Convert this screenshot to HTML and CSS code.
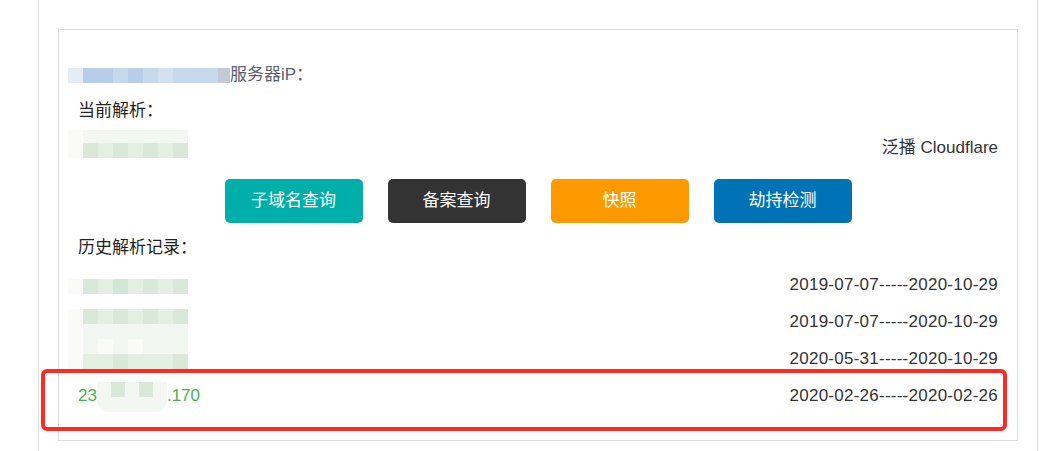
FILE: index.html
```html
<!DOCTYPE html>
<html lang="zh-CN">
<head>
<meta charset="utf-8">
<title>解析记录</title>
<link rel="stylesheet" href="styles.css">
</head>
<body>
<div class="frame">
  <div class="panel">
    <div class="row row-server">
      <span class="mosaic blue">
        <i class="b0"></i><i class="b2"></i><i class="b2"></i><i class="b1"></i><i class="b2"></i><i class="b1"></i><i class="b3"></i><i class="b1"></i><i class="b1"></i><i class="b1"></i><i class="b4"></i>
      </span>
      <span class="server-label">服务器iP：</span>
    </div>
    <div class="row label">当前解析：</div>
    <div class="row row-current">
      <span class="mosaic green two">
        <i class="m0"></i><i class="m1"></i><i class="m1"></i><i class="m1"></i><i class="m1"></i><i class="m1"></i><i class="m1"></i><i class="m1"></i>
        <i class="m0"></i><i class="m3"></i><i class="m2"></i><i class="m3"></i><i class="m2"></i><i class="m3"></i><i class="m2"></i><i class="m3"></i>
      </span>
      <span class="value">泛播 Cloudflare</span>
    </div>
    <div class="btns">
      <a class="btn teal">子域名查询</a>
      <a class="btn dark">备案查询</a>
      <a class="btn orange">快照</a>
      <a class="btn blue-btn">劫持检测</a>
    </div>
    <div class="row label history-label">历史解析记录：</div>
    <div class="history">
      <div class="hist-mosaic">
        <i class="m0"></i><i class="m3"></i><i class="m2"></i><i class="m4"></i><i class="m2"></i><i class="m3"></i><i class="m2"></i><i class="m3"></i>
        <i class="w"></i><i class="w"></i><i class="w"></i><i class="w"></i><i class="w"></i><i class="w"></i><i class="w"></i><i class="w"></i>
        <i class="m0"></i><i class="m3"></i><i class="m2"></i><i class="m3"></i><i class="m2"></i><i class="m3"></i><i class="m2"></i><i class="m3"></i>
        <i class="m0"></i><i class="m1"></i><i class="m1"></i><i class="m1"></i><i class="m1"></i><i class="m1"></i><i class="m1"></i><i class="m1"></i>
        <i class="m0"></i><i class="m1"></i><i class="m0"></i><i class="m1"></i><i class="m0"></i><i class="m1"></i><i class="m1"></i><i class="m1"></i>
        <i class="m0"></i><i class="m2"></i><i class="m2"></i><i class="m3"></i><i class="m2"></i><i class="m2"></i><i class="m2"></i><i class="m3"></i>
      </div>
      <div class="hist-row"><span class="ip"></span><span class="date">2019-07-07-----2020-10-29</span></div>
      <div class="hist-row"><span class="ip"></span><span class="date">2019-07-07-----2020-10-29</span></div>
      <div class="hist-row"><span class="ip"></span><span class="date">2020-05-31-----2020-10-29</span></div>
      <div class="hist-row marked">
        <span class="ip green-text">23<span class="mosaic ipblur"><i class="m1"></i><i class="m3"></i><i class="m1"></i><i class="m3"></i><i class="m1"></i><i class="m1"></i><i class="m1"></i><i class="m1"></i><i class="m1"></i><i class="m1"></i></span>.170</span>
        <span class="date">2020-02-26-----2020-02-26</span>
        <div class="highlight"></div>
      </div>
    </div>
  </div>
</div>
</body>
</html>
```

FILE: styles.css
```css
* { box-sizing: border-box; }
html, body { margin: 0; padding: 0; background: #fff; }
body {
  font-family: "Liberation Sans", "Noto Sans CJK SC", sans-serif;
  font-size: 17px;
  color: #333;
}
.frame {
  margin-left: 38px;
  width: 1000px;
  min-height: 451px;
  border-left: 1px solid #ddd;
  border-right: 1px solid #ddd;
  padding: 29px 19px 0 19px;
}
.panel {
  width: 960px;
  border: 1px solid #ddd;
  padding: 27px 19px 26px 19px;
}
.row { display: flex; align-items: center; height: 36px; line-height: 36px; }
.label { color: #222; }
.row-server { }
.server-label { color: #5a6070; }
.mosaic { display: inline-grid; grid-auto-rows: 15px; }
.mosaic i { display: block; }
.mosaic.blue {
  margin-left: -10px;
  grid-template-columns: repeat(10, 15px) 12px;
  height: 15px;
}
.b0 { background: #e4ecf6; }
.b1 { background: #c5d8ec; }
.b2 { background: #b8cde7; }
.b3 { background: #d2e0f0; }
.b4 { background: #c4c9d6; }
.m0 { background: #fafbf8; }
.m1 { background: #f2f7f2; }
.m2 { background: #e4efe4; }
.m3 { background: #d8e9da; }
.m4 { background: #d2e6d4; }
.w { background: #fff; }
.row-current {
  height: 37px;
  justify-content: space-between;
  align-items: flex-start;
}
.mosaic.green.two {
  margin-left: -10px;
  margin-top: 1px;
  grid-template-columns: repeat(8, 15px);
  grid-template-rows: 13px 15px;
}
.value { line-height: 37px; }
.btns {
  display: flex;
  justify-content: center;
  gap: 25px;
  margin-top: 13px;
}
.btn {
  display: block;
  width: 138px;
  height: 44px;
  line-height: 44px;
  border-radius: 5px;
  color: #fff;
  text-align: center;
  font-size: 17px;
}
.teal { background: #00afaa; }
.dark { background: #333333; }
.orange { background: #ff9900; }
.blue-btn { background: #0072b6; }
.history-label { margin-top: 7px; }
.history { position: relative; }
.hist-mosaic {
  position: absolute;
  top: 13px;
  left: -10px;
  display: grid;
  grid-template-columns: repeat(8, 15px);
  grid-auto-rows: 15px;
  z-index: 1;
}
.hist-mosaic i { display: block; }
.hist-row {
  display: flex;
  justify-content: space-between;
  align-items: center;
  height: 37px;
  line-height: 37px;
}
.date { letter-spacing: 0.25px; color: #333; }
.green-text { color: #4caf50; display: flex; align-items: center; }
.mosaic.ipblur {
  grid-template-columns: repeat(5, 14px);
  grid-template-rows: 15px 15px;
  margin-top: 3px;
  border-radius: 0 0 12px 12px;
  overflow: hidden;
}
.marked { position: relative; }
.highlight {
  position: absolute;
  top: -8px;
  bottom: -17px;
  left: -37px;
  right: -9px;
  border: 4px solid #ff2a22;
  border-radius: 6px;
}
```
